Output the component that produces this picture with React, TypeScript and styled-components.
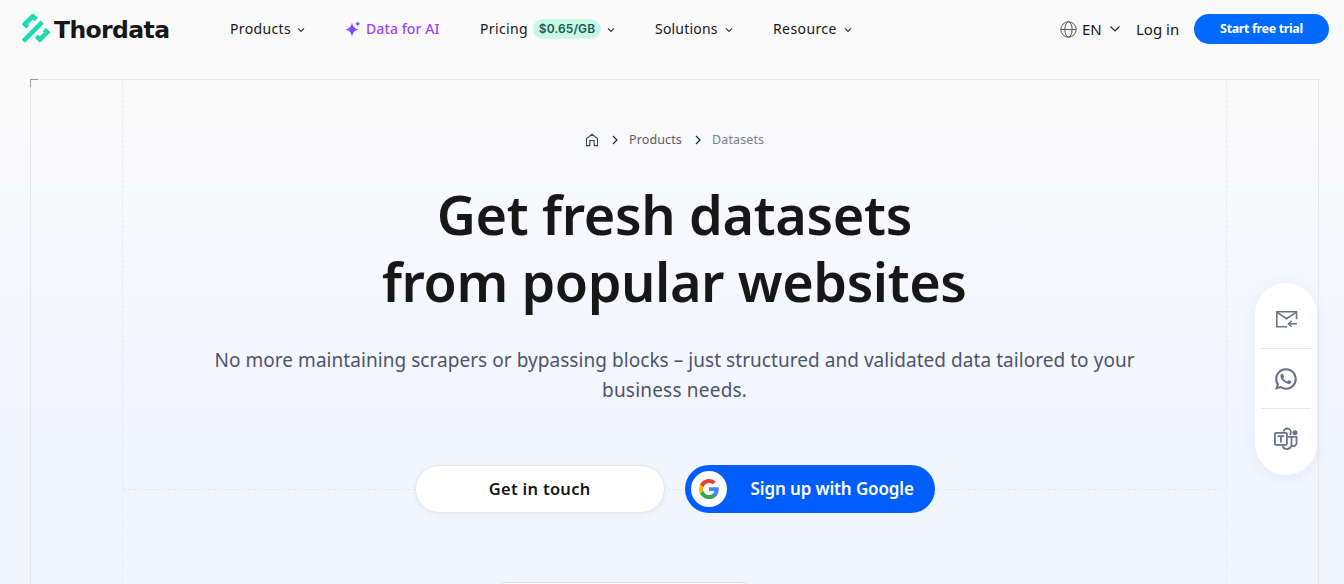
import React from "react";
import styled, { createGlobalStyle } from "styled-components";
import { RiWhatsappLine } from "react-icons/ri";

const GlobalStyle = createGlobalStyle`
  * { box-sizing: border-box; }
  body {
    margin: 0;
    overflow: hidden;
    font-family: "Noto Sans", Roboto, sans-serif;
    color: #171717;
  }
`;

const Page = styled.div`
  height: 584px;
  overflow: hidden;
  display: flex;
  flex-direction: column;
  background: linear-gradient(180deg, #fafafa 90px, #f8f9fd 200px, #f3f6ff 390px, #f0f5ff 480px);
`;

const Header = styled.header`
  flex: none;
  height: 58px;
  padding: 0 15px 0 22px;
  display: flex;
  align-items: center;
`;

const Logo = styled.a`
  display: flex;
  align-items: center;
  width: 208px;
  gap: 3px;
  svg { flex: none; margin-bottom: 1px; }
`;

const Wordmark = styled.span`
  font: 700 23.5px/30px "DejaVu Sans", sans-serif;
  letter-spacing: -0.6px;
  padding-top: 2px;
`;

const Nav = styled.nav`
  display: flex;
  align-items: center;
  gap: 40px;
  flex: 1;
`;

const NavItem = styled.a<{ $accent?: boolean }>`
  display: flex;
  align-items: center;
  gap: 5px;
  font-size: 14px;
  line-height: 20px;
  color: ${(p) => (p.$accent ? "#9747ff" : "#171717")};
  font-weight: ${(p) => (p.$accent ? 500 : 400)};
  svg { flex: none; }
`;

const Label = styled.span<{ $width: number; $spacing?: number }>`
  width: ${(p) => p.$width}px;
  letter-spacing: ${(p) => p.$spacing ?? 0}px;
  white-space: nowrap;
`;

const Price = styled.span`
  width: 68px;
  height: 20px;
  border-radius: 10px;
  background: #caf6e8;
  color: #155a50;
  font: 600 12px/20px Inter, sans-serif;
  letter-spacing: 0.1px;
  text-align: center;
`;

const Actions = styled.div`
  display: flex;
  align-items: center;
  font-size: 15px;
  line-height: 20px;
`;

const Language = styled.div`
  display: flex;
  align-items: center;
  gap: 5px;
  margin-right: 15px;
`;

const Trial = styled.button`
  width: 135px;
  height: 30px;
  margin-left: 15px;
  border: 0;
  border-radius: 15px;
  background: #006aff;
  color: #fff;
  font: 700 12.5px/30px "Noto Sans", sans-serif;
  letter-spacing: -0.35px;
  padding: 0;
`;

const Frame = styled.main`
  position: relative;
  flex: none;
  height: 600px;
  margin: 21px 25px 0 30px;
  border: 1px solid #e8e9eb;
  display: grid;
  grid-template-columns: 92px 1fr 92px;
  &::before {
    content: "";
    position: absolute;
    left: -1px;
    top: -1px;
    width: 7px;
    height: 7px;
    border: solid #999;
    border-width: 1px 0 0 1px;
  }
`;

const Rail = styled.div<{ $side: "left" | "right" }>`
  background: repeating-linear-gradient(180deg, #e8eaee 0 3px, transparent 3px 5px)
    ${(p) => (p.$side === "left" ? "right" : "left")} top / 1px 100% no-repeat;
`;

const Hero = styled.section`
  display: flex;
  flex-direction: column;
  align-items: center;
  padding-top: 50px;
`;

const Crumbs = styled.div`
  display: flex;
  align-items: center;
  height: 20px;
  font-size: 12.5px;
  line-height: 20px;
`;

const Crumb = styled.span<{ $current?: boolean; $width: number }>`
  width: ${(p) => p.$width}px;
  color: ${(p) => (p.$current ? "#788089" : "#5f5860")};
  letter-spacing: 0.12px;
  white-space: nowrap;
`;

const Sep = styled.svg`
  margin: 0 10px 0 12px;
`;

const Title = styled.h1`
  margin: 31px 0 0;
  display: flex;
  flex-direction: column;
  align-items: center;
  font-size: 54px;
  line-height: 67px;
  font-weight: 600;
  color: #171717;
`;

const Line = styled.span<{ $spacing: number }>`
  letter-spacing: ${(p) => p.$spacing}px;
  margin-right: ${(p) => -p.$spacing}px;
  white-space: nowrap;
`;

const Lead = styled.p`
  margin: 30px 0 0;
  display: flex;
  flex-direction: column;
  align-items: center;
  font-size: 19px;
  line-height: 30px;
  font-weight: 400;
  color: #50536a;
`;

const Buttons = styled.div`
  align-self: stretch;
  margin-top: 60px;
  height: 48px;
  display: flex;
  justify-content: center;
  gap: 20px;
  background: repeating-linear-gradient(90deg, #e4e7ee 0 3px, transparent 3px 5px) left 24px / 100% 1px no-repeat;
`;

const Contact = styled.button`
  width: 250px;
  height: 48px;
  border: 1px solid #e5e6e8;
  border-radius: 24px;
  background: #fff;
  box-shadow: 0 2px 5px rgba(60, 90, 160, 0.06);
  color: #171717;
  font: 600 16.5px/46px "Noto Sans", sans-serif;
  padding: 0;
`;

const Google = styled.button`
  width: 250px;
  height: 48px;
  border: 0;
  border-radius: 24px;
  background: #005eff;
  color: #fff;
  display: flex;
  align-items: center;
  gap: 24px;
  padding: 0 0 0 6px;
  font: 600 17px/48px "Noto Sans", sans-serif;
`;

const GoogleMark = styled.span`
  flex: none;
  width: 36px;
  height: 36px;
  border-radius: 50%;
  background: #fff;
  display: grid;
  place-items: center;
`;

const Card = styled.div`
  margin-top: 69px;
  width: 246px;
  height: 40px;
  margin-right: 101px;
  border: 1px solid #e0e1e4;
  border-radius: 4px;
  background: #fafbfc;
`;

const Dock = styled.aside`
  position: fixed;
  left: 1255px;
  top: 283px;
  width: 62px;
  height: 192px;
  border-radius: 31px;
  background: #fff;
  box-shadow: 0 2px 14px rgba(60, 90, 200, 0.08);
  padding: 5px 6px;
  color: #697386;
`;

const DockItem = styled.div`
  height: 60px;
  display: grid;
  place-items: center;
  & + & { border-top: 1px solid #e6e6e8; }
  &:first-child { padding-top: 2px; }
`;

const Chevron = () => (
  <svg width="9" height="10" viewBox="0 0 9 10" fill="none" stroke="#333" strokeWidth="1.200">
    <path d="M2 4.300 5 7.300l3-3" />
  </svg>
);

const LogoMark = () => (
  <svg width="29" height="30" viewBox="0 0 29 30" fill="none" stroke="#1bdcae" strokeWidth="4.600">
    <path d="M1.200 27.200 20.200 8.200" />
    <path d="M5.800 13 2.900 10.200 10.800 2.200l3.500 3.500" />
    <path d="M22.300 15.400l2.900 2.900-7.300 7.300-3.500-3.500" />
  </svg>
);

const Sparkle = () => (
  <svg width="16" height="16" viewBox="0 0 16 16" fill="#7a4dff">
    <path d="M7 1.500C7.900 5.800 9.600 7.700 14.200 8.500 9.600 9.300 7.900 11.200 7 15.800 6.100 11.200 4.400 9.300 0 8.500 4.400 7.700 6.100 5.800 7 1.500Z" />
    <path d="M12.700 0.300c.5 1.700 1.100 2.300 2.900 2.700-1.800.4-2.400 1-2.900 2.700-.5-1.700-1.100-2.300-2.900-2.700 1.800-.4 2.400-1 2.900-2.700Z" />
  </svg>
);

const Globe = () => (
  <svg width="17" height="17" viewBox="0 0 17 17" fill="none" stroke="#555" strokeWidth="1">
    <circle cx="8.500" cy="8.500" r="7.700" />
    <ellipse cx="8.500" cy="8.500" rx="3.600" ry="7.700" />
    <path d="M.8 8.500h15.400" />
  </svg>
);

const Home = () => (
  <svg width="14" height="14" viewBox="0 0 14 14" fill="none" stroke="#3c4358" strokeWidth="1.100">
    <path d="M1.500 5.600 7 1.300l5.500 4.300v7H9.200V7.500H4.800v5.100H1.500Z" />
  </svg>
);

const Separator = () => (
  <Sep width="8" height="10" viewBox="0 0 8 10" fill="none" stroke="#202535" strokeWidth="1.200">
    <path d="m2 1 4 4-4 4" />
  </Sep>
);

const GoogleG = () => (
  <svg width="22" height="22" viewBox="0 0 24 24">
    <path fill="#4285F4" d="M22.560 12.250c0-.78-.07-1.530-.2-2.250H12v4.260h5.920c-.26 1.370-1.040 2.530-2.210 3.310v2.770h3.570c2.080-1.920 3.280-4.740 3.280-8.090z" />
    <path fill="#34A853" d="M12 23c2.970 0 5.460-.98 7.280-2.660l-3.570-2.770c-.98.66-2.230 1.060-3.710 1.060-2.860 0-5.290-1.930-6.160-4.530H2.180v2.840C3.990 20.530 7.700 23 12 23z" />
    <path fill="#FBBC05" d="M5.840 14.090c-.22-.66-.35-1.360-.35-2.090s.13-1.430.35-2.090V7.070H2.180C1.430 8.550 1 10.220 1 12s.43 3.450 1.180 4.930l3.660-2.840z" />
    <path fill="#EA4335" d="M12 5.380c1.620 0 3.060.56 4.210 1.640l3.150-3.150C17.450 2.090 14.970 1 12 1 7.700 1 3.990 3.470 2.180 7.070l3.660 2.840c.87-2.600 3.300-4.530 6.160-4.530z" />
  </svg>
);

const MailReply = () => (
  <svg width="24" height="20" viewBox="0 0 24 20" fill="none" stroke="currentColor" strokeWidth="1.600">
    <path d="M13 17.800H2.800V2.800H22.500v7.400" />
    <path d="m3.200 3.300 9.300 6.400L22 3.300" />
    <path d="M23 14.800h-8.500M17.600 11.800l-3 3 3 3" />
  </svg>
);

const Teams = () => (
  <svg width="26" height="26" viewBox="0 0 26 26" fill="none" stroke="currentColor" strokeWidth="1.800">
    <rect x="1.900" y="6.800" width="12" height="12" rx="1" />
    <path d="M4.600 10.200h6.600M7.900 10.200v6.400" />
    <path d="M10.600 5.600a3.700 3.700 0 1 1 6.200 3.300M14.500 10.800h4v8.300a4.700 4.700 0 0 1-9 1" />
    <path d="M18.500 10.800h5v6.400a3 3 0 0 1-4.900 2.200" />
    <circle cx="22" cy="6.700" r="2.500" fill="currentColor" stroke="none" />
  </svg>
);

export default function App() {
  return (
    <>
      <GlobalStyle />
      <Page>
        <Header>
          <Logo><LogoMark /><Wordmark>Thordata</Wordmark></Logo>
          <Nav>
            <NavItem><Label $width={61} $spacing={0.35}>Products</Label><Chevron /></NavItem>
            <NavItem $accent><Sparkle /><Label $width={74} $spacing={0.1}>Data for AI</Label></NavItem>
            <NavItem><Label $width={48} $spacing={0.35}>Pricing</Label><Price>$0.65/GB</Price><Chevron /></NavItem>
            <NavItem><Label $width={64} $spacing={0.2}>Solutions</Label><Chevron /></NavItem>
            <NavItem><Label $width={65} $spacing={0.4}>Resource</Label><Chevron /></NavItem>
          </Nav>
          <Actions>
            <Language>
              <Globe />
              <Label $width={22}>EN</Label>
              <svg width="12" height="12" viewBox="0 0 12 12" fill="none" stroke="#222" strokeWidth="1.100"><path d="m1.500 3.500 4.500 4.500 4.500-4.500" /></svg>
            </Language>
            <Label $width={43}>Log in</Label>
            <Trial>Start free trial</Trial>
          </Actions>
        </Header>
        <Frame>
          <Rail $side="left" />
          <Hero>
            <Crumbs>
              <Home />
              <Separator />
              <Crumb $width={53}>Products</Crumb>
              <Separator />
              <Crumb $width={52} $current>Datasets</Crumb>
            </Crumbs>
            <Title>
              <Line $spacing={-0.35}>Get fresh datasets</Line>
              <Line $spacing={-0.43}>from popular websites</Line>
            </Title>
            <Lead>
              <Line $spacing={0.05}>No more maintaining scrapers or bypassing blocks – just structured and validated data tailored to your</Line>
              <Line $spacing={0.2}>business needs.</Line>
            </Lead>
            <Buttons>
              <Contact><Line $spacing={0.3}>Get in touch</Line></Contact>
              <Google><GoogleMark><GoogleG /></GoogleMark><Line $spacing={-0.13}>Sign up with Google</Line></Google>
            </Buttons>
            <Card />
          </Hero>
          <Rail $side="right" />
        </Frame>
        <Dock>
          <DockItem><MailReply /></DockItem>
          <DockItem><RiWhatsappLine size={26} /></DockItem>
          <DockItem><Teams /></DockItem>
        </Dock>
      </Page>
    </>
  );
}
